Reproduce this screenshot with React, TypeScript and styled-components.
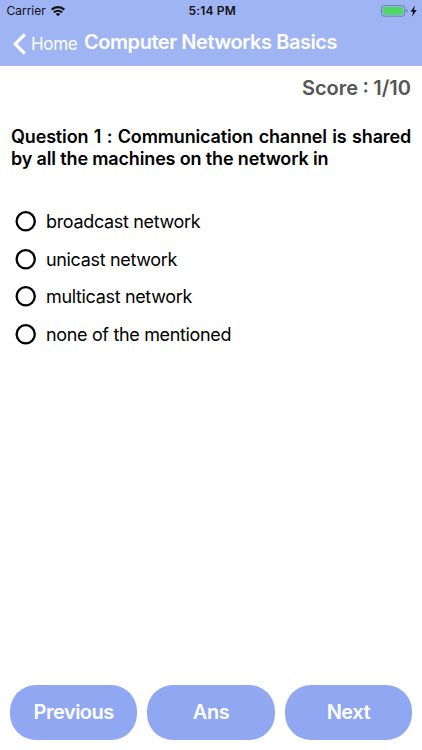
import React from 'react';
import styled, { createGlobalStyle } from 'styled-components';

const Global = createGlobalStyle`
  * { box-sizing: border-box; }
  body { margin: 0; background: #fff; font-family: Inter, "Liberation Sans", sans-serif; color: #111; }
`;
const Screen = styled.div`
  width: 422px; height: 750px; display: flex; flex-direction: column; overflow: hidden; background: #fff;
`;
const Header = styled.header`
  height: 66px; flex: none; background: #9fb4f3; border-bottom: 1px solid #abb8e2;
`;
const StatusBar = styled.div`
  height: 22px; display: grid; grid-template-columns: 1fr auto 1fr; align-items: center; padding: 0 4px 0 6.5px;
  font-size: 12px; line-height: 22px; white-space: nowrap;
`;
const StatusSide = styled.div<{ $end?: boolean }>`
  display: flex; align-items: center; gap: 5px; justify-content: ${p => (p.$end ? 'flex-end' : 'flex-start')};
`;
const Carrier = styled.span`
  width: 39.5px; letter-spacing: -0.02px;
`;
const Time = styled.span`
  font-weight: 600; letter-spacing: 0.2px;
`;
const NavBar = styled.nav`
  height: 43px; display: flex; align-items: center; padding: 0 0 1px 13px;
`;
const Back = styled.button`
  display: flex; align-items: center; gap: 4px; padding: 1px 0 0; border: 0; background: none; font: inherit;
`;
const BackLabel = styled.span`
  width: 46px; font-size: 17px; line-height: 22px; letter-spacing: -0.3px; color: #fff; text-align: left;
`;
const Title = styled.h1`
  margin: 0 0 2px 7px; font-size: 20px; line-height: 24px; font-weight: 600; letter-spacing: -0.44px;
  color: #fff; white-space: nowrap;
`;
const Score = styled.div`
  margin: 10px 11px 0; text-align: right; font-size: 20px; line-height: 24px; font-weight: 600;
  word-spacing: -0.6px; color: #555;
`;
const Question = styled.p`
  width: 400px; margin: 26px 0 0 11px; font-size: 18px; line-height: 21.5px; font-weight: 600;
  letter-spacing: -0.15px; color: #000; text-align: justify;
`;
const Options = styled.div`
  margin: 34px 0 0 15px; display: flex; flex-direction: column;
`;
const Option = styled.label`
  height: 37.6px; display: flex; align-items: center; gap: 10px; font-size: 18px; letter-spacing: -0.34px; color: #000;
`;
const Footer = styled.footer`
  margin-top: auto; padding: 0 10px 10px; display: grid; grid-template-columns: repeat(3, 1fr); gap: 10px;
`;
const Action = styled.button`
  height: 55px; padding: 0 0 1px; border: 0; border-radius: 26px; background: #90a8f1; color: #fff;
  font: 600 20px Inter, sans-serif; letter-spacing: -0.5px;
`;

const options = ['broadcast network', 'unicast network', 'multicast network', 'none of the mentioned'];

const WifiIcon = () => (
  <svg width="14" height="11" viewBox="0 0 14 11" fill="none" stroke="#111" strokeWidth="2.3">
    <path d="M.8 3.7a8.8 8.8 0 0 1 12.4 0" />
    <path d="M2.9 6.5a5.8 5.8 0 0 1 8.2 0" strokeWidth="1.9" />
    <path d="M7 10.3 4.8 8.1a3.1 3.1 0 0 1 4.4 0Z" fill="#111" stroke="none" />
  </svg>
);

const BatteryIcon = () => (
  <svg width="37" height="12" viewBox="0 0 37 12">
    <rect x=".5" y=".6" width="23.3" height="10.6" rx="2.6" fill="none" stroke="#6f7dab" />
    <rect x="2" y="2" width="20.3" height="7.8" rx="1.3" fill="#4cd964" />
    <path d="M25.1 4.2q1.5.4 1.5 1.7t-1.5 1.7Z" fill="#6f7dab" />
    <path d="M33.9.6 29.5 6.7h2.6L31 11.4l4.8-6.3H33Z" fill="#111" />
  </svg>
);

export default function App() {
  return (
    <Screen>
      <Global />
      <Header>
        <StatusBar>
          <StatusSide><Carrier>Carrier</Carrier><WifiIcon /></StatusSide>
          <Time>5:14 PM</Time>
          <StatusSide $end><BatteryIcon /></StatusSide>
        </StatusBar>
        <NavBar>
          <Back>
            <svg width="14" height="22" viewBox="0 0 14 22">
              <path d="M11.8 1.3 2.2 11l9.6 9.7" fill="none" stroke="#fff" strokeWidth="3.2" />
            </svg>
            <BackLabel>Home</BackLabel>
          </Back>
          <Title>Computer Networks Basics</Title>
        </NavBar>
      </Header>
      <Score>Score : 1/10</Score>
      <Question>Question 1 : Communication channel is shared by all the machines on the network in</Question>
      <Options>
        {options.map(text => (
          <Option key={text}>
            <svg width="21" height="21" viewBox="0 0 21 21">
              <circle cx="10.7" cy="10.3" r="9.1" fill="none" stroke="#000" strokeWidth="2.3" />
            </svg>
            {text}
          </Option>
        ))}
      </Options>
      <Footer><Action>Previous</Action><Action>Ans</Action><Action>Next</Action></Footer>
    </Screen>
  );
}
